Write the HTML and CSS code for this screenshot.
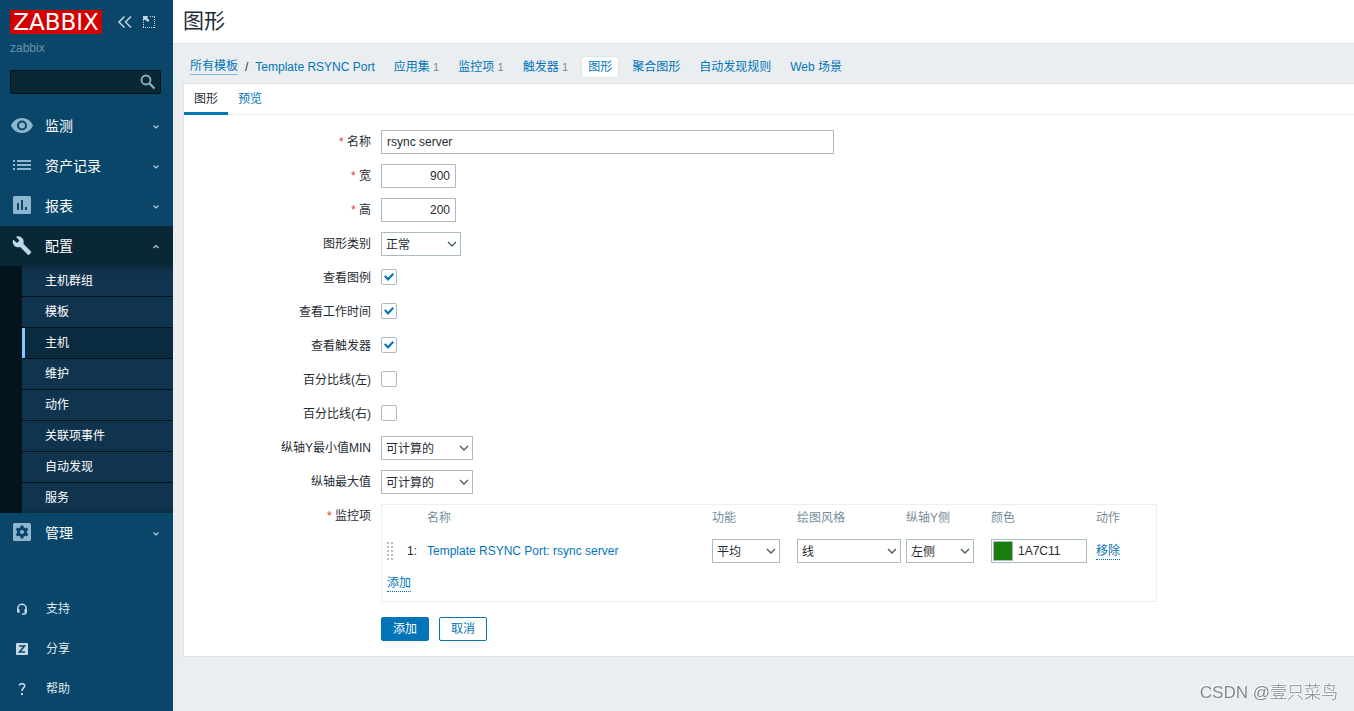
FILE: index.html
```html
<!DOCTYPE html>
<html lang="zh-CN">
<head>
<meta charset="utf-8">
<title>图形</title>
<link rel="stylesheet" href="styles.css">
</head>
<body>
<aside class="sidebar">
  <header class="brand">
    <a class="logo" href="#">ZABBIX</a>
    <button class="icon-btn" type="button" aria-label="收起侧边栏">
      <svg width="16" height="14" viewBox="0 0 16 14" fill="none" stroke="currentColor" stroke-width="1.500"><path d="M7.500 1.500 2 7l5.500 5.500M14 1.500 8.500 7l5.500 5.500"/></svg>
    </button>
    <button class="icon-btn" type="button" aria-label="隐藏侧边栏">
      <svg width="12" height="12" viewBox="0 0 12 12" fill="none" stroke="currentColor"><path stroke-dasharray="1 1" d="M7 .5h5M11.500 1v11M0 11.500h12M.5 6v6"/><path fill="currentColor" stroke="none" d="M0 0h5.500L4 1.500 6.500 4.500 5 6 1.700 3.500 0 5.500z"/></svg>
    </button>
  </header>
  <div class="server-name">zabbix</div>
  <form class="search">
    <input type="text" aria-label="搜索">
    <button type="button" aria-label="搜索">
      <svg width="16" height="16" viewBox="0 0 16 16" fill="none" stroke="currentColor"><circle cx="6" cy="6" r="4.500" stroke-width="1.800"/><path stroke-width="2.200" d="m9.500 9.500 5 5"/></svg>
    </button>
  </form>
  <nav class="menu">
    <a class="menu-item" href="#"><svg class="menu-icon" viewBox="0 0 22 22"><path fill="currentColor" fill-rule="evenodd" d="M11 3C6 3 1.800 6 0 10.500 1.800 15 6 18 11 18s9.200-3 11-7.500C20.200 6 16 3 11 3zm0 12.500a5 5 0 1 1 0-10 5 5 0 0 1 0 10zm0-8a3 3 0 1 0 0 6 3 3 0 0 0 0-6z"/></svg><span>监测</span><svg class="caret" viewBox="0 0 8 8"><path d="m1.500 3.500 2.500 2.500 2.500-2.500"/></svg></a>
    <a class="menu-item" href="#"><svg class="menu-icon" viewBox="0 0 22 22"><path fill="currentColor" d="M2 5h2v2H2zM6 5h14v2H6zM2 9h2v2H2zM6 9h14v2H6zM2 13h2v2H2zM6 13h14v2H6z"/></svg><span>资产记录</span><svg class="caret" viewBox="0 0 8 8"><path d="m1.500 3.500 2.500 2.500 2.500-2.500"/></svg></a>
    <a class="menu-item" href="#"><svg class="menu-icon" viewBox="0 0 22 22"><path fill="currentColor" fill-rule="evenodd" d="M3.500 1h15A1.500 1.500 0 0 1 20 2.500v15a1.500 1.500 0 0 1-1.500 1.500h-15A1.500 1.500 0 0 1 2 17.500v-15A1.500 1.500 0 0 1 3.500 1zM6 8v7h2V8zm4-3v10h2V5zm4 7v3h2v-3z"/></svg><span>报表</span><svg class="caret" viewBox="0 0 8 8"><path d="m1.500 3.500 2.500 2.500 2.500-2.500"/></svg></a>
    <a class="menu-item open" href="#"><svg class="menu-icon" viewBox="0 0 26 26"><path fill="currentColor" d="M23.700 19.500l-9.100-9.100c.9-2.300.4-5-1.500-6.900-2-2-5-2.400-7.400-1.300L10 6.500l-3 3-4.400-4.300c-1.200 2.400-.7 5.400 1.300 7.400 1.900 1.900 4.600 2.400 6.900 1.500l9.100 9.100c.4.4 1 .4 1.400 0l2.300-2.300c.5-.4.5-1.100.1-1.400z"/></svg><span>配置</span><svg class="caret" viewBox="0 0 8 8"><path d="m1.500 6 2.500-2.500 2.500 2.500"/></svg></a>
    <div class="submenu">
      <a href="#">主机群组</a>
      <a href="#">模板</a>
      <a class="current" href="#">主机</a>
      <a href="#">维护</a>
      <a href="#">动作</a>
      <a href="#">关联项事件</a>
      <a href="#">自动发现</a>
      <a href="#">服务</a>
    </div>
    <a class="menu-item" href="#"><svg class="menu-icon" viewBox="0 0 22 22"><rect fill="currentColor" x="2" y="1" width="18" height="18" rx="1.500"/><g fill="#0a466a"><circle cx="11" cy="10" r="5"/><path d="M9.500 3.500h3v13h-3z"/><path d="M9.500 3.500h3v13h-3z" transform="rotate(60 11 10)"/><path d="M9.500 3.500h3v13h-3z" transform="rotate(120 11 10)"/></g><circle fill="currentColor" cx="11" cy="10" r="2"/></svg><span>管理</span><svg class="caret" viewBox="0 0 8 8"><path d="m1.500 3.500 2.500 2.500 2.500-2.500"/></svg></a>
  </nav>
  <nav class="menu-footer">
    <a href="#"><svg viewBox="0 0 12 12"><path fill="none" stroke="currentColor" stroke-width="1.500" d="M1.800 7V5.500a4.200 4.200 0 0 1 8.400 0V9c0 1.300-.8 2-2 2H6"/><path fill="currentColor" d="M1 6h2.500v4H2.300L1 8.700zM8.500 6H11v3l-1.200 1H8.500z"/></svg><span>支持</span></a>
    <a href="#"><svg viewBox="0 0 12 12"><rect fill="currentColor" width="12" height="12" rx="1"/><path fill="none" stroke="#0a466a" stroke-width="1.600" d="M3 3h5.500L3.500 9H9"/></svg><span>分享</span></a>
    <a href="#"><svg viewBox="0 0 12 12"><path fill="none" stroke="currentColor" stroke-width="1.600" d="M3.200 2.500C4 0 9 0 8.700 3 8.600 5 6 5 6 8"/><path fill="currentColor" d="M5 10h2v2H5z"/></svg><span>帮助</span></a>
  </nav>
</aside>

<main class="content">
  <header class="page-title"><h1>图形</h1></header>
  <nav class="object-nav">
    <div class="crumbs"><a class="underlined" href="#">所有模板</a><span>/</span><a href="#">Template RSYNC Port</a></div>
    <div><a href="#">应用集</a> <sup>1</sup></div>
    <div><a href="#">监控项</a> <sup>1</sup></div>
    <div><a href="#">触发器</a> <sup>1</sup></div>
    <div class="selected"><a href="#">图形</a></div>
    <div><a href="#">聚合图形</a></div>
    <div><a href="#">自动发现规则</a></div>
    <div><a href="#">Web 场景</a></div>
  </nav>
  <section class="card">
    <div class="tabs"><a class="active" href="#">图形</a><a href="#">预览</a></div>
    <form class="form">
      <label class="required" for="name">名称</label>
      <div><input class="field field-name" id="name" type="text" value="rsync server"></div>
      <label class="required" for="width">宽</label>
      <div><input class="field field-number" id="width" type="text" value="900"></div>
      <label class="required" for="height">高</label>
      <div><input class="field field-number" id="height" type="text" value="200"></div>
      <label for="type">图形类别</label>
      <div><span class="select w80"><select id="type"><option>正常</option></select><svg viewBox="0 0 10 6"><path d="m1 1 4 4 4-4"/></svg></span></div>
      <label for="legend">查看图例</label>
      <div><input class="check" id="legend" type="checkbox" checked></div>
      <label for="worktime">查看工作时间</label>
      <div><input class="check" id="worktime" type="checkbox" checked></div>
      <label for="triggers">查看触发器</label>
      <div><input class="check" id="triggers" type="checkbox" checked></div>
      <label for="pleft">百分比线(左)</label>
      <div><input class="check" id="pleft" type="checkbox"></div>
      <label for="pright">百分比线(右)</label>
      <div><input class="check" id="pright" type="checkbox"></div>
      <label for="ymin">纵轴Y最小值MIN</label>
      <div><span class="select w92"><select id="ymin"><option>可计算的</option></select><svg viewBox="0 0 10 6"><path d="m1 1 4 4 4-4"/></svg></span></div>
      <label for="ymax">纵轴最大值</label>
      <div><span class="select w92"><select id="ymax"><option>可计算的</option></select><svg viewBox="0 0 10 6"><path d="m1 1 4 4 4-4"/></svg></span></div>
      <div class="label required">监控项</div>
      <div class="items">
        <table>
          <colgroup><col class="c20"><col class="c20"><col class="c285"><col class="c85"><col class="c109"><col class="c85"><col class="c105"><col class="c65"></colgroup>
          <thead><tr><th></th><th></th><th>名称</th><th>功能</th><th>绘图风格</th><th>纵轴Y侧</th><th>颜色</th><th>动作</th></tr></thead>
          <tbody>
            <tr class="item-row">
              <td><svg class="drag" width="6" height="18" viewBox="0 0 6 18"><path d="M0 0h2v2H0zM4 0h2v2H4zM0 4h2v2H0zM4 4h2v2H4zM0 8h2v2H0zM4 8h2v2H4zM0 12h2v2H0zM4 12h2v2H4zM0 16h2v2H0zM4 16h2v2H4z"/></svg></td>
              <td>1:</td>
              <td><a href="#">Template RSYNC Port: rsync server</a></td>
              <td><span class="select w68"><select aria-label="功能"><option>平均</option></select><svg viewBox="0 0 10 6"><path d="m1 1 4 4 4-4"/></svg></span></td>
              <td><span class="select w104"><select aria-label="绘图风格"><option>线</option></select><svg viewBox="0 0 10 6"><path d="m1 1 4 4 4-4"/></svg></span></td>
              <td><span class="select w68"><select aria-label="纵轴Y侧"><option>左侧</option></select><svg viewBox="0 0 10 6"><path d="m1 1 4 4 4-4"/></svg></span></td>
              <td><span class="color"><button type="button" aria-label="选择颜色"></button><input type="text" aria-label="颜色" value="1A7C11"></span></td>
              <td><button class="link" type="button">移除</button></td>
            </tr>
            <tr class="add-row"><td colspan="8"><button class="link" type="button">添加</button></td></tr>
          </tbody>
        </table>
      </div>
      <div class="actions"><button class="btn primary" type="button">添加</button><button class="btn" type="button">取消</button></div>
    </form>
  </section>
  <div class="watermark">CSDN @壹只菜鸟</div>
</main>
</body>
</html>
```
FILE: styles.css
```css
* { box-sizing: border-box; }
body {
  display: flex;
  min-height: 100vh;
  margin: 0;
  background: #ebeef0;
  color: #1f2c33;
  font: 12px/16px "Liberation Sans", "Noto Sans CJK SC", sans-serif;
}
a { color: #0275b8; text-decoration: none; }
button, input, select { font: inherit; color: inherit; }
button { cursor: pointer; }

.sidebar {
  display: flex;
  flex: none;
  flex-direction: column;
  width: 173px;
  padding: 10px 0 2px;
  background: #0a466a;
  color: #fff;
}
.brand { display: flex; align-items: center; height: 24px; padding-left: 10px; }
.logo {
  flex: none;
  width: 92px;
  margin-right: 15px;
  background: #d40000;
  color: #fff;
  font: 23px/24px "DejaVu Sans", sans-serif;
  text-align: center;
}
.icon-btn { display: flex; flex: none; margin-right: 10px; padding: 0; border: 0; background: none; color: #c2d8e4; }
.server-name { margin-top: 6px; padding: 0 10px; color: #6d93a8; }
.search {
  display: flex;
  align-items: center;
  height: 24px;
  margin: 14px 12px 12px 10px;
  border: 1px solid #04121a;
  border-radius: 2px;
  background: #0a2736;
}
.search input { flex: 1; min-width: 0; border: 0; background: none; }
.search button { display: flex; padding: 0; margin-right: 4px; border: 0; background: none; color: #8fb0c4; }

.menu-item {
  display: flex;
  align-items: center;
  height: 40px;
  padding: 0 13px 0 11px;
  color: #fff;
  font-size: 14px;
}
.menu-item span { flex: 1; }
.menu-icon { width: 22px; height: 22px; margin-right: 12px; color: #8fb6ce; }
.caret { width: 8px; height: 8px; fill: none; stroke: #b4cddb; stroke-width: 1.2; }
.open { background: #0a2736; }
.open .menu-icon { color: #b8d8ec; }
.submenu {
  display: grid;
  gap: 1px;
  padding-left: 22px;
  background: linear-gradient(90deg, #03141e 22px, #04121a 22px);
}
.submenu a { padding: 0 20px; border-left: 3px solid #10344e; background: #10344e; color: #fff; line-height: 30px; }
.submenu a:first-child { background: linear-gradient(#0c2a3e, #10344e 8px); border-image: linear-gradient(#0c2a3e, #10344e 8px) 1; }
.submenu a:last-child { background: linear-gradient(#10344e 24px, #0d2d44); }
.submenu .current { border-color: #7dcbff; background: #0a2b3f; }
.menu-footer { margin-top: auto; }
.menu-footer a { display: flex; align-items: center; height: 40px; padding-left: 16px; color: #dfe9ef; }
.menu-footer svg { width: 12px; height: 12px; margin-right: 18px; color: #c6d8e3; }

.content { flex: 1; min-width: 0; }
.page-title { padding: 9px 10px 10px; border-bottom: 1px solid #dfe4e7; background: #fff; }
h1 { margin: 0; font-size: 21px; font-weight: 400; line-height: 24px; }
.object-nav { display: flex; align-items: center; gap: 7px; height: 39px; padding: 6px 11px 0; }
.object-nav div { padding: 0 6px; line-height: 20px; white-space: nowrap; }
.object-nav .crumbs { display: flex; gap: 7px; }
.object-nav sup { color: #768d99; font-size: 11px; line-height: 16px; vertical-align: baseline; }
.underlined { border-bottom: 1px solid #7fb9dc; line-height: 15px; align-self: center; }
.object-nav .selected { border: 1px solid #dfe4e7; border-radius: 2px; background: #fff; }

.card { margin-left: 10px; border: 1px solid #dfe4e7; border-right: 0; background: #fff; }
.tabs { display: flex; border-bottom: 1px solid #ebeef0; }
.tabs a { height: 31px; margin-bottom: -1px; padding: 0 10px; line-height: 30px; }
.tabs .active { border-bottom: 3px solid #0275b8; color: #1f2c33; }
.form {
  display: grid;
  grid-template-columns: 187px 1fr;
  gap: 10px;
  padding: 15px 0;
}
.form > label, .label { text-align: right; line-height: 24px; }
.required::before { content: "* "; color: #e33734; }
.form > div { display: flex; align-items: center; min-height: 24px; }
.form > .label { display: block; }
.field { height: 24px; padding: 0 5px; border: 1px solid #acbbc2; background: #fff; }
.field-name { width: 453px; }
.field-number { width: 75px; text-align: right; }
.select { position: relative; display: block; height: 24px; }
.select select { width: 100%; height: 24px; padding: 1px 4px 0; border: 1px solid #acbbc2; border-radius: 0; background: #fff; appearance: none; }
.select svg { position: absolute; top: 9px; right: 4px; width: 10px; height: 6px; fill: none; stroke: #4d5b63; stroke-width: 1.4; pointer-events: none; }
.w68 { width: 68px; }
.w80 { width: 80px; }
.w92 { width: 92px; }
.w104 { width: 104px; }
.check { display: grid; place-items: center; width: 16px; height: 16px; margin: 0 0 2px; border: 1px solid #acbbc2; border-radius: 2px; background: #fff; appearance: none; }
.check:checked::before { content: ""; width: 10px; height: 8px; background: #0275b8; clip-path: polygon(0 45%, 15% 28%, 40% 58%, 85% 0, 100% 18%, 40% 100%); }

.items table { width: 776px; border: 1px solid #ebeef0; border-spacing: 0; table-layout: fixed; }
.items th, .items td { padding: 0 0 0 5px; text-align: left; }
.items th { height: 26px; color: #768d99; font-weight: 400; }
.c20 { width: 20px; }
.c65 { width: 65px; }
.c85 { width: 85px; }
.c105 { width: 105px; }
.c109 { width: 109px; }
.c285 { width: 285px; }
.item-row td { height: 40px; }
.add-row td { height: 30px; padding-bottom: 6px; }
.drag { display: block; fill: #acbbc2; }
.color { display: flex; align-items: center; width: 96px; height: 24px; border: 1px solid #acbbc2; }
.color button { flex: none; width: 20px; height: 20px; margin-left: 1px; padding: 0; border: 1px solid #acbbc2; background: #1a7c11; }
.color input { min-width: 0; height: 22px; padding: 0 5px; border: 0; background: none; }
.link { padding: 0; border: 0; border-bottom: 1px dotted #0275b8; background: none; color: #0275b8; line-height: 15px; }
.form > .actions { grid-column: 2; gap: 10px; margin-top: 5px; }
.btn { width: 48px; height: 24px; padding: 0; border: 1px solid #0275b8; border-radius: 2px; background: #fff; color: #0275b8; }
.primary { background: #0275b8; color: #fff; }
.watermark {
  position: fixed;
  right: 16px;
  bottom: 6px;
  color: #85898c;
  font: 17px/24px "Liberation Sans", "Noto Sans CJK SC", sans-serif;
  font-weight: 300;
  text-shadow: -1px -1px #fff;
}
```
